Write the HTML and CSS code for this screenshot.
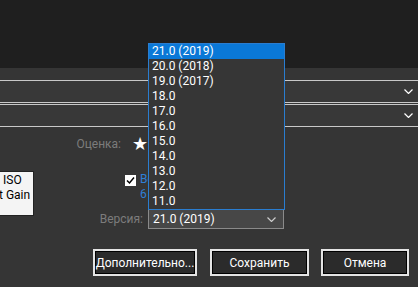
FILE: index.html
```html
<!DOCTYPE html>
<html lang="ru">
<head>
<meta charset="utf-8">
<link rel="stylesheet" href="styles.css">
</head>
<body>
<div class="header"></div>
<div class="panel">
  <div class="combo wide"><svg class="chev" width="9" height="5" viewBox="0 0 9 5"><path d="M0.5 0.5 L4.5 4.5 L8.5 0.5" fill="none" stroke="#fff" stroke-width="1.2"/></svg></div>
  <div class="combo wide"><svg class="chev" width="9" height="5" viewBox="0 0 9 5"><path d="M0.5 0.5 L4.5 4.5 L8.5 0.5" fill="none" stroke="#fff" stroke-width="1.2"/></svg></div>

  <div class="row rating">
    <span class="label">Оценка:</span>
    <span class="star">★</span>
  </div>

  <div class="row checks">
    <div class="listbox"><div class="item1">ISO</div><div class="item2">t Gain</div></div>
    <span class="checkbox"><svg width="11" height="11" viewBox="0 0 11 11"><path d="M2 5.5 L4.5 8 L9 2.5" fill="none" stroke="#000" stroke-width="1.5"/></svg></span>
    <div class="link"><div>Вс</div><div>6</div></div>
  </div>

  <div class="row version">
    <span class="label">Версия:</span>
    <div class="select">
      <span>21.0 (2019)</span>
      <svg class="chev" width="9" height="5" viewBox="0 0 9 5"><path d="M0.5 0.5 L4.5 4.5 L8.5 0.5" fill="none" stroke="#ccc" stroke-width="1.2"/></svg>
    </div>
  </div>

  <div class="buttons">
    <button class="btn more">Дополнительно...</button>
    <button class="btn save">Сохранить</button>
    <button class="btn cancel">Отмена</button>
  </div>
</div>

<ul class="dropdown">
  <li class="sel">21.0 (2019)</li>
  <li>20.0 (2018)</li>
  <li>19.0 (2017)</li>
  <li>18.0</li>
  <li>17.0</li>
  <li>16.0</li>
  <li>15.0</li>
  <li>14.0</li>
  <li>13.0</li>
  <li>12.0</li>
  <li>11.0</li>
</ul>
</body>
</html>
```
FILE: styles.css
```css
html, body {
  margin: 0;
  padding: 0;
}
body {
  width: 418px;
  height: 287px;
  overflow: hidden;
  background: #353535;
  font-family: Roboto, "Noto Sans", sans-serif;
  font-size: 12px;
  color: #fff;
  position: relative;
}
.header {
  height: 68px;
  background: #1f1f1f;
}
.panel {
  padding-top: 12px;
}
.combo {
  height: 21px;
  background: #383838;
  border-top: 1px solid #c8c8c8;
  border-bottom: 1px solid #c8c8c8;
  display: flex;
  align-items: center;
  justify-content: flex-end;
  padding-right: 5px;
  margin-bottom: 1px;
}
.row {
  display: flex;
}
.rating {
  margin-top: 8px;
  height: 17px;
  align-items: center;
}
.label {
  color: #7c7c7c;
  text-align: right;
  padding-right: 5px;
  box-sizing: border-box;
}
.rating .label {
  width: 126px;
}
.star {
  margin-left: 6px;
  font-size: 18px;
  line-height: 17px;
  color: #fff;
}
.checks {
  margin-top: 19px;
  height: 38px;
  align-items: flex-start;
}
.listbox {
  width: 33px;
  height: 42px;
  background: #f4f4f4;
  border: 1px solid #222;
  border-left: none;
  color: #000;
  line-height: 15px;
  padding-top: 1px;
  white-space: nowrap;
  overflow: hidden;
}
.item1 {
  padding-left: 3px;
}
.item2 {
  margin-left: -1px;
}
.checkbox {
  margin-left: 91px;
  margin-top: 4px;
  width: 11px;
  height: 11px;
  background: #fff;
  display: flex;
}
.link {
  margin-left: 4px;
  margin-top: 1px;
  width: 8px;
  overflow: hidden;
  white-space: nowrap;
  color: #2f7fd6;
  line-height: 15px;
}
.version {
  height: 20px;
  align-items: center;
}
.version .label {
  width: 148px;
  line-height: 20px;
}
.select {
  width: 136px;
  height: 20px;
  box-sizing: border-box;
  border: 1px solid #8a8a8a;
  background: #474747;
  display: flex;
  align-items: center;
  justify-content: space-between;
  padding: 0 7px 0 4px;
}
.buttons {
  margin-top: 20px;
  display: flex;
  justify-content: flex-end;
  gap: 12px;
  padding-right: 9px;
}
.btn {
  height: 27px;
  background: #2b2b2b;
  border: 2px solid #e4e4e4;
  box-shadow: inset 0 0 0 1px #000;
  color: #fff;
  font-family: inherit;
  font-size: 12px;
  padding: 0;
}
.more { width: 104px; margin-right: 1px; }
.save { width: 99px; }
.cancel { width: 88px; }
.dropdown {
  position: absolute;
  left: 148px;
  top: 43px;
  width: 137px;
  box-sizing: border-box;
  margin: 0;
  padding: 0;
  list-style: none;
  background: #363636;
  border: 1px solid #2a7dd0;
}
.dropdown li {
  height: 15px;
  line-height: 15px;
  padding-left: 3px;
}
.dropdown li.sel {
  background: #0a78d7;
}
```
